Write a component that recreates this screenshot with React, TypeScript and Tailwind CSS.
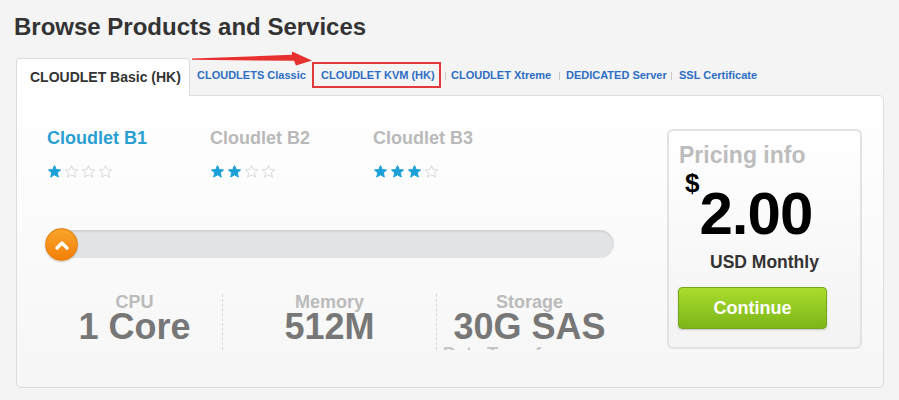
const plans = [
  { name: "Cloudlet B1", stars: 1, active: true },
  { name: "Cloudlet B2", stars: 2, active: false },
  { name: "Cloudlet B3", stars: 3, active: false },
];

function Star({ on }: { on: boolean }) {
  return (
    <svg width="15" height="15" viewBox="0 0 24 24">
      <path
        d="M12 2.5l2.8 6.4 6.9.6-5.2 4.6 1.6 6.8L12 17.3l-6.1 3.6 1.6-6.8-5.2-4.6 6.9-.6z"
        fill={on ? "#1ba1d8" : "#ffffff"}
        stroke={on ? "#1ba1d8" : "#d8d8d8"}
        strokeWidth="1.6"
        strokeLinejoin="round"
      />
    </svg>
  );
}

function Sep({ className }: { className: string }) {
  return <span className={`mt-[14px] h-[8px] w-px bg-[#c8c8c8] ${className}`} />;
}

export default function App() {
  return (
    <div className="relative h-[400px] w-[899px] overflow-hidden bg-[#f4f4f4] font-['Liberation_Sans',Arial,sans-serif]">
      <h1 className="pl-[14px] pt-[13px] text-[24px] font-bold leading-[28px] text-[#333]">
        Browse Products and Services
      </h1>

      {/* tabs */}
      <div className="relative z-10 ml-[16px] mt-[17px] flex h-[38px] items-start whitespace-nowrap text-[11px] font-bold text-[#2d6ec4]">
        <div className="flex h-[38px] w-[174px] items-center rounded-t-[4px] border border-b-0 border-[#dcdcdc] bg-white pl-[13px] text-[14px] text-[#333]">
          CLOUDLET Basic (HK)
        </div>
        <span className="ml-[7px] mt-[10px] w-[113px] leading-[14px]">CLOUDLETS Classic</span>
        <div className="ml-[2px] mt-[4px] flex h-[26px] w-[129px] items-center border-2 border-[#e23a3a] pl-[7px]">
          CLOUDLET KVM (HK)
        </div>
        <Sep className="ml-[4px]" />
        <span className="ml-[5px] mt-[10px] w-[103px] leading-[14px]">CLOUDLET Xtreme</span>
        <Sep className="ml-[5px]" />
        <span className="ml-[6px] mt-[10px] w-[100px] leading-[14px]">DEDICATED Server</span>
        <Sep className="ml-[5px]" />
        <span className="ml-[7px] mt-[10px] leading-[14px]">SSL Certificate</span>
      </div>

      {/* red annotation arrow */}
      <svg className="absolute left-[188px] top-[48px] z-20" width="130" height="22" viewBox="0 0 130 22">
        <polygon points="4,10.5 104,6.8 104,3.5 124,12.5 108,17.5 106,12.8 4,11.8" fill="#e8312f" />
      </svg>

      {/* panel */}
      <div className="-mt-px ml-[16px] flex h-[293px] w-[868px] rounded-b-[5px] rounded-tr-[5px] border border-[#dcdcdc] bg-gradient-to-b from-white to-[#f6f6f6]">
        <div className="w-[650px] pl-[30px] pt-[30px]">
          <div className="flex">
            {plans.map((p) => (
              <div key={p.name} className="w-[163px]">
                <div
                  className={`text-[18px] font-bold leading-[24px] ${
                    p.active ? "text-[#2a9fd2]" : "text-[#b9b9b9]"
                  }`}
                >
                  {p.name}
                </div>
                <div className="mt-[14px] flex gap-[2px]">
                  {[0, 1, 2, 3].map((i) => (
                    <Star key={i} on={i < p.stars} />
                  ))}
                </div>
              </div>
            ))}
          </div>

          {/* slider */}
          <div className="relative mt-[51px] h-[28px] w-[567px] rounded-full bg-[#e1e3e5] shadow-[inset_0_2px_2px_rgba(0,0,0,0.07)]">
            <div className="absolute left-[-2px] top-[-2px] flex h-[33px] w-[33px] items-center justify-center rounded-full border border-[#e07a06] bg-gradient-to-b from-[#f9a42a] to-[#f27f05] shadow-[0_1px_2px_rgba(0,0,0,0.2)]">
              <svg width="14" height="10" viewBox="0 0 14 10">
                <polyline points="2,8 7,3 12,8" fill="none" stroke="#fff" strokeWidth="3.2" strokeLinecap="round" strokeLinejoin="round" />
              </svg>
            </div>
          </div>

          {/* specs */}
          <div className="mt-[36px] flex text-center font-bold">
            <div className="w-[175px]">
              <div className="text-[18px] leading-[16px] text-[#bbb]">CPU</div>
              <div className="mt-[1px] text-[36px] leading-[32px] text-[#777]">1 Core</div>
            </div>
            <div className="w-[214px] border-l border-dashed border-[#d8d8d8]">
              <div className="text-[18px] leading-[16px] text-[#bbb]">Memory</div>
              <div className="mt-[1px] text-[36px] leading-[32px] text-[#777]">512M</div>
            </div>
            <div className="w-[186px] border-l border-dashed border-[#d8d8d8]">
              <div className="text-[18px] leading-[16px] text-[#bbb]">Storage</div>
              <div className="mt-[1px] text-[36px] leading-[32px] text-[#777]">30G SAS</div>
              <div className="mt-[2px] h-[5px] overflow-hidden pl-[6px] text-left text-[18px] leading-[18px] text-[#c4c4c4]">
                Data Transfer
              </div>
            </div>
          </div>
        </div>

        {/* pricing */}
        <div className="mt-[33px] flex h-[220px] w-[195px] flex-col rounded-[6px] border-2 border-[#e2e2e2] bg-gradient-to-b from-white to-[#f3f3f3] font-bold">
          <div className="pl-[10px] pt-[11px] text-[23px] leading-[26px] text-[#bdbdbd]">Pricing info</div>
          <div className="ml-[16px] mt-[2px] flex items-start text-black">
            <span className="text-[26px] leading-[26px]">$</span>
            <span className="mt-[14px] text-[60px] leading-[60px] tracking-[-1px]">2.00</span>
          </div>
          <div className="ml-[41px] mt-[8px] text-[17.5px] leading-[20px] text-[#333]">USD Monthly</div>
          <button className="ml-[9px] mt-[15px] h-[42px] w-[149px] rounded-[4px] border border-[#74a818] bg-gradient-to-b from-[#a9dc2c] to-[#7db619] text-[18px] text-white shadow-[0_1px_2px_rgba(0,0,0,0.2)]">
            Continue
          </button>
        </div>
      </div>
    </div>
  );
}
